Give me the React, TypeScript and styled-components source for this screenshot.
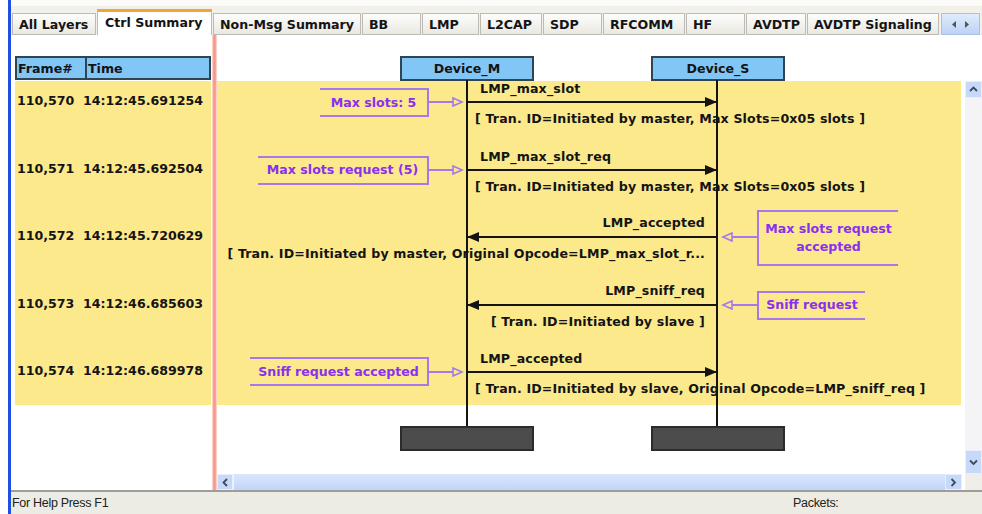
import React from "react"
import styled, {createGlobalStyle} from "styled-components"

// palette

const COLORS = {
  ink: "#141414",
  white: "#ffffff",
  yellow: "#fce98b",
  headerBlue: "#82c6f6",
  boxBorder: "#2f4556",
  purple: "#8a30f0",
  purpleLine: "#a679ea",
  edge: "#1e4ee4",
  tabBorder: "#bdbbb3",
  orange: "#f4a62c",
  dark: "#4b4c4b",
  chrome: "#ecebe4",
  scroll: "#c7d9f9",
  pink: "#f39a8a",
}

const BOLD = `font-family: "DejaVu Sans", Verdana, sans-serif; font-weight: 700; font-size: 12.6px;`
const ROW_H = 67.5

// data

const TABS = [
  {label: "All Layers", w: 84},
  {label: "Ctrl Summary", w: 115, active: true},
  {label: "Non-Msg Summary", w: 148},
  {label: "BB", w: 59},
  {label: "LMP", w: 57},
  {label: "L2CAP", w: 62},
  {label: "SDP", w: 59},
  {label: "RFCOMM", w: 82},
  {label: "HF", w: 59},
  {label: "AVDTP", w: 60},
  {label: "AVDTP Signaling", w: 132},
]

type Note = {lines: string[]; left: number; width: number; top: number; height: number}
type Msg = {frame: string; time: string; label: string; detail: string; dir: "right" | "left"; note: Note}

const MESSAGES: Msg[] = [
  {
    frame: "110,570", time: "14:12:45.691254", label: "LMP_max_slot", dir: "right",
    detail: "[ Tran. ID=Initiated by master, Max Slots=0x05 slots ]",
    note: {lines: ["Max slots: 5"], left: 103, width: 109, top: 7, height: 29},
  },
  {
    frame: "110,571", time: "14:12:45.692504", label: "LMP_max_slot_req", dir: "right",
    detail: "[ Tran. ID=Initiated by master, Max Slots=0x05 slots ]",
    note: {lines: ["Max slots request (5)"], left: 41, width: 171, top: 7, height: 29},
  },
  {
    frame: "110,572", time: "14:12:45.720629", label: "LMP_accepted", dir: "left",
    detail: "[ Tran. ID=Initiated by master, Original Opcode=LMP_max_slot_r...",
    note: {lines: ["Max slots request", "accepted"], left: 540, width: 141, top: -6, height: 56},
  },
  {
    frame: "110,573", time: "14:12:46.685603", label: "LMP_sniff_req", dir: "left",
    detail: "[ Tran. ID=Initiated by slave ]",
    note: {lines: ["Sniff request"], left: 540, width: 108, top: 7, height: 29},
  },
  {
    frame: "110,574", time: "14:12:46.689978", label: "LMP_accepted", dir: "right",
    detail: "[ Tran. ID=Initiated by slave, Original Opcode=LMP_sniff_req ]",
    note: {lines: ["Sniff request accepted"], left: 33, width: 179, top: 6, height: 29},
  },
]

// global

const GlobalStyle = createGlobalStyle`
  html, body {
    margin: 0;
    padding: 0;
    background: ${COLORS.white};
  }
  body {
    font-family: "DejaVu Sans", Verdana, sans-serif;
    color: ${COLORS.ink};
  }
`

// frame

const Window = styled.div`
  display: flex;
  width: 982px;
  height: 514px;
  overflow: hidden;
  background: ${COLORS.white};
`

const Gutter = styled.div`
  width: 8px;
  background: ${COLORS.white};
`

const BlueEdge = styled.div`
  width: 3px;
  background: ${COLORS.edge};
`

const Main = styled.div`
  display: flex;
  flex-direction: column;
  flex: 1;
  min-width: 0;
`

// tabs

const TabStrip = styled.div`
  display: flex;
  align-items: flex-end;
  gap: 1px;
  height: 35px;
  padding-left: 1px;
  box-sizing: border-box;
  background: linear-gradient(#fbfbf9 0 6px, #f1f0ea 6px);
`

const Tab = styled.div<{$w: number; $active?: boolean}>`
  display: flex;
  align-items: center;
  box-sizing: border-box;
  width: ${p => p.$w}px;
  height: ${p => (p.$active ? 26 : 22)}px;
  padding: ${p => (p.$active ? "0 0 3px 7px" : "0 0 0 6px")};
  border: 1px solid ${COLORS.tabBorder};
  border-bottom: ${p => (p.$active ? "none" : `1px solid ${COLORS.tabBorder}`)};
  border-top: ${p => (p.$active ? `3px solid ${COLORS.orange}` : `1px solid ${COLORS.tabBorder}`)};
  background: ${p => (p.$active ? COLORS.white : "linear-gradient(#fdfdfc, #e9e8e2)")};
  white-space: nowrap;
  ${BOLD}
`

const TabScroller = styled.div`
  display: flex;
  align-items: center;
  justify-content: center;
  gap: 9px;
  box-sizing: border-box;
  width: 39px;
  height: 22px;
  margin-left: 1px;
  border: 1px solid #aac0e6;
  background: linear-gradient(#e1ebfc, #bcd2f6);
`

// content

const Content = styled.div`
  display: flex;
  height: 455px;
`

const LeftPanel = styled.div`
  display: flex;
  flex-direction: column;
  width: 201px;
  padding: 21px 1px 0 4px;
  box-sizing: border-box;
`

const TableHeader = styled.div`
  display: flex;
  height: 24px;
  box-sizing: border-box;
  border: 2px solid ${COLORS.boxBorder};
  background: ${COLORS.headerBlue};
  margin-bottom: 1px;
  ${BOLD}
`

const HeaderCell = styled.div<{$w?: number}>`
  display: flex;
  align-items: center;
  padding-left: 1px;
  ${p => (p.$w ? `width: ${p.$w}px; border-right: 2px solid ${COLORS.boxBorder};` : "flex: 1;")}
`

const LeftBand = styled.div`
  display: grid;
  grid-template-rows: repeat(5, ${ROW_H}px);
  height: 324px;
  overflow: hidden;
  background: ${COLORS.yellow};
`

const LeftRow = styled.div`
  display: flex;
  padding: 12px 0 0 2px;
  line-height: 16px;
  ${BOLD}
`

const FrameCell = styled.div`
  width: 66px;
`

const Divider = styled.div`
  width: 5px;
  background: linear-gradient(90deg, #fde4de, ${COLORS.pink} 35%, ${COLORS.pink} 65%, #fde4de);
`

// diagram

const DiagramCol = styled.div`
  display: flex;
  flex-direction: column;
  width: 745px;
`

const Canvas = styled.div`
  position: relative;
  display: flex;
  flex-direction: column;
  height: 439px;
`

const DeviceRow = styled.div<{$top: number}>`
  display: flex;
  gap: 117px;
  height: ${p => p.$top + 25}px;
  padding: ${p => p.$top}px 0 0 183px;
  box-sizing: border-box;
`

const DeviceBox = styled.div<{$dark?: boolean}>`
  display: flex;
  align-items: center;
  justify-content: center;
  box-sizing: border-box;
  width: 134px;
  height: 25px;
  border: 2px solid ${p => (p.$dark ? "#2b2b2b" : COLORS.boxBorder)};
  background: ${p => (p.$dark ? COLORS.dark : COLORS.headerBlue)};
  ${BOLD}
`

const Band = styled.div`
  display: grid;
  grid-template-rows: repeat(5, ${ROW_H}px);
  height: 324px;
  margin: 0 1px 0 0;
  overflow: hidden;
  background: ${COLORS.yellow};
`

const MessageRow = styled.div`
  position: relative;
`

const Lifeline = styled.div<{$x: number}>`
  position: absolute;
  left: ${p => p.$x}px;
  top: 45px;
  width: 2px;
  height: 346px;
  background: ${COLORS.ink};
  z-index: 1;
`

const ArrowSvg = styled.svg`
  position: absolute;
  left: 250px;
  top: 16px;
  overflow: visible;
`

const MsgText = styled.div<{$side: "left" | "right"; $top: number; $inset: number}>`
  position: absolute;
  top: ${p => p.$top}px;
  ${p => (p.$side === "left" ? `left: ${p.$inset}px;` : `right: ${p.$inset}px;`)}
  white-space: nowrap;
  line-height: 16px;
  ${BOLD}
  letter-spacing: 0.15px;
`

const NoteBox = styled.div<{$side: "left" | "right"; $left: number; $top: number; $width: number; $height: number}>`
  position: absolute;
  left: ${p => p.$left}px;
  top: ${p => p.$top}px;
  width: ${p => p.$width}px;
  height: ${p => p.$height}px;
  box-sizing: border-box;
  display: flex;
  flex-direction: column;
  align-items: center;
  justify-content: center;
  border-top: 2px solid ${COLORS.purpleLine};
  border-bottom: 2px solid ${COLORS.purpleLine};
  ${p => (p.$side === "left" ? "border-right" : "border-left")}: 2px solid ${COLORS.purpleLine};
  color: ${COLORS.purple};
  text-align: center;
  line-height: 18px;
  white-space: nowrap;
  ${BOLD}
`

const Connector = styled.svg<{$left: number}>`
  position: absolute;
  left: ${p => p.$left}px;
  top: 16px;
  overflow: visible;
`

// scrollbars

const HScroll = styled.div`
  display: flex;
  height: 16px;
  background: linear-gradient(#dbe6fb, #c2d5f7);
`

const ScrollBtn = styled.div<{$w: number; $h: number}>`
  display: flex;
  align-items: center;
  justify-content: center;
  width: ${p => p.$w}px;
  height: ${p => p.$h}px;
  box-sizing: border-box;
  border: 1px solid #e8eefb;
  background: ${COLORS.scroll};
`

const HTrack = styled.div`
  flex: 1;
  border-left: 1px solid #eef3fd;
`

const VCol = styled.div`
  display: flex;
  flex-direction: column;
  width: 20px;
  padding-left: 3px;
  box-sizing: border-box;
`

const VBar = styled.div`
  display: flex;
  flex-direction: column;
  justify-content: space-between;
  height: 393px;
  margin-top: 46px;
  background: #f4f4f7;
`

const Corner = styled.div`
  flex: 1;
  background: #efeee9;
`

// status bar

const StatusBar = styled.div`
  display: flex;
  align-items: center;
  height: 24px;
  box-sizing: border-box;
  border-top: 2px solid #9e9d97;
  background: ${COLORS.chrome};
  font-family: "Liberation Sans", Arial, sans-serif;
  font-size: 12.5px;
  letter-spacing: -0.3px;
  color: #222;
`

const StatusText = styled.div<{$w?: number}>`
  ${p => (p.$w ? `width: ${p.$w}px;` : "flex: 1;")}
  padding-left: 1px;
`

function Chevron({dir}: {dir: "up" | "down" | "left" | "right"}) {
  const pts = {
    up: "1,6 4.5,2.5 8,6",
    down: "1,2.5 4.5,6 8,2.5",
    left: "6,1 2.5,4.5 6,8",
    right: "2.5,1 6,4.5 2.5,8",
  }[dir]
  return (
    <svg width="9" height="9" viewBox="0 0 9 9">
      <polyline points={pts} fill="none" stroke="#3c4a66" strokeWidth="1.8"/>
    </svg>
  )
}

function TinyTriangle({dir}: {dir: "left" | "right"}) {
  return (
    <svg width="4" height="7" viewBox="0 0 4 7">
      <polygon points={dir === "left" ? "4,0 0,3.5 4,7" : "0,0 4,3.5 0,7"} fill="#555"/>
    </svg>
  )
}

function MessageArrow({dir}: {dir: "right" | "left"}) {
  return (
    <ArrowSvg width="250" height="10">
      <line x1="0" y1="5" x2="250" y2="5" stroke={COLORS.ink} strokeWidth="2"/>
      {dir === "right"
        ? <polygon points="250,5 238,0 238,10" fill={COLORS.ink}/>
        : <polygon points="0,5 12,0 12,10" fill={COLORS.ink}/>}
    </ArrowSvg>
  )
}

function NoteConnector({side, from}: {side: "left" | "right"; from: number}) {
  const tip = side === "left" ? 245 : 506
  const left = Math.min(from, tip)
  const w = Math.abs(tip - from)
  const x1 = from - left
  const x2 = tip - left
  const back = side === "left" ? x2 - 9 : x2 + 9
  return (
    <Connector $left={left} width={w} height="10">
      <line x1={x1} y1="5" x2={back} y2="5" stroke={COLORS.purpleLine} strokeWidth="2"/>
      <polygon points={`${x2},5 ${back},1 ${back},9`} fill={COLORS.yellow} stroke={COLORS.purpleLine} strokeWidth="1.6"/>
    </Connector>
  )
}

function Message({msg}: {msg: Msg}) {
  const noteSide = msg.dir === "right" ? "left" : "right"
  const from = noteSide === "left" ? msg.note.left + msg.note.width : msg.note.left
  return (
    <MessageRow>
      {msg.dir === "right" ? (
        <>
          <MsgText $side="left" $inset={263} $top={0}>{msg.label}</MsgText>
          <MsgText $side="left" $inset={258} $top={30}>{msg.detail}</MsgText>
        </>
      ) : (
        <>
          <MsgText $side="right" $inset={256} $top={-1}>{msg.label}</MsgText>
          <MsgText $side="right" $inset={256} $top={30}>{msg.detail}</MsgText>
        </>
      )}
      <MessageArrow dir={msg.dir}/>
      <NoteBox
        $side={noteSide}
        $left={msg.note.left}
        $top={msg.note.top}
        $width={msg.note.width}
        $height={msg.note.height}
      >
        {msg.note.lines.map(l => <div key={l}>{l}</div>)}
      </NoteBox>
      <NoteConnector side={noteSide} from={from}/>
    </MessageRow>
  )
}

export default function App() {
  return (
    <>
      <GlobalStyle/>
      <Window>
        <Gutter/>
        <BlueEdge/>
        <Main>
          <TabStrip>
            {TABS.map(t => (
              <Tab key={t.label} $w={t.w} $active={t.active}>{t.label}</Tab>
            ))}
            <TabScroller>
              <TinyTriangle dir="left"/>
              <TinyTriangle dir="right"/>
            </TabScroller>
          </TabStrip>

          <Content>
            <LeftPanel>
              <TableHeader>
                <HeaderCell $w={67}>Frame#</HeaderCell>
                <HeaderCell>Time</HeaderCell>
              </TableHeader>
              <LeftBand>
                {MESSAGES.map(m => (
                  <LeftRow key={m.frame}>
                    <FrameCell>{m.frame}</FrameCell>
                    <div>{m.time}</div>
                  </LeftRow>
                ))}
              </LeftBand>
            </LeftPanel>

            <Divider/>

            <DiagramCol>
              <Canvas>
                <DeviceRow $top={21}>
                  <DeviceBox>Device_M</DeviceBox>
                  <DeviceBox>Device_S</DeviceBox>
                </DeviceRow>
                <Band>
                  {MESSAGES.map(m => <Message key={m.frame} msg={m}/>)}
                </Band>
                <DeviceRow $top={21}>
                  <DeviceBox $dark/>
                  <DeviceBox $dark/>
                </DeviceRow>
                <Lifeline $x={249}/>
                <Lifeline $x={499}/>
              </Canvas>
              <HScroll>
                <ScrollBtn $w={16} $h={16}><Chevron dir="left"/></ScrollBtn>
                <HTrack/>
                <ScrollBtn $w={17} $h={16}><Chevron dir="right"/></ScrollBtn>
              </HScroll>
            </DiagramCol>

            <VCol>
              <VBar>
                <ScrollBtn $w={17} $h={17}><Chevron dir="up"/></ScrollBtn>
                <ScrollBtn $w={17} $h={24}><Chevron dir="down"/></ScrollBtn>
              </VBar>
              <Corner/>
            </VCol>
          </Content>

          <StatusBar>
            <StatusText>For Help Press F1</StatusText>
            <StatusText $w={189}>Packets:</StatusText>
          </StatusBar>
        </Main>
      </Window>
    </>
  )
}
